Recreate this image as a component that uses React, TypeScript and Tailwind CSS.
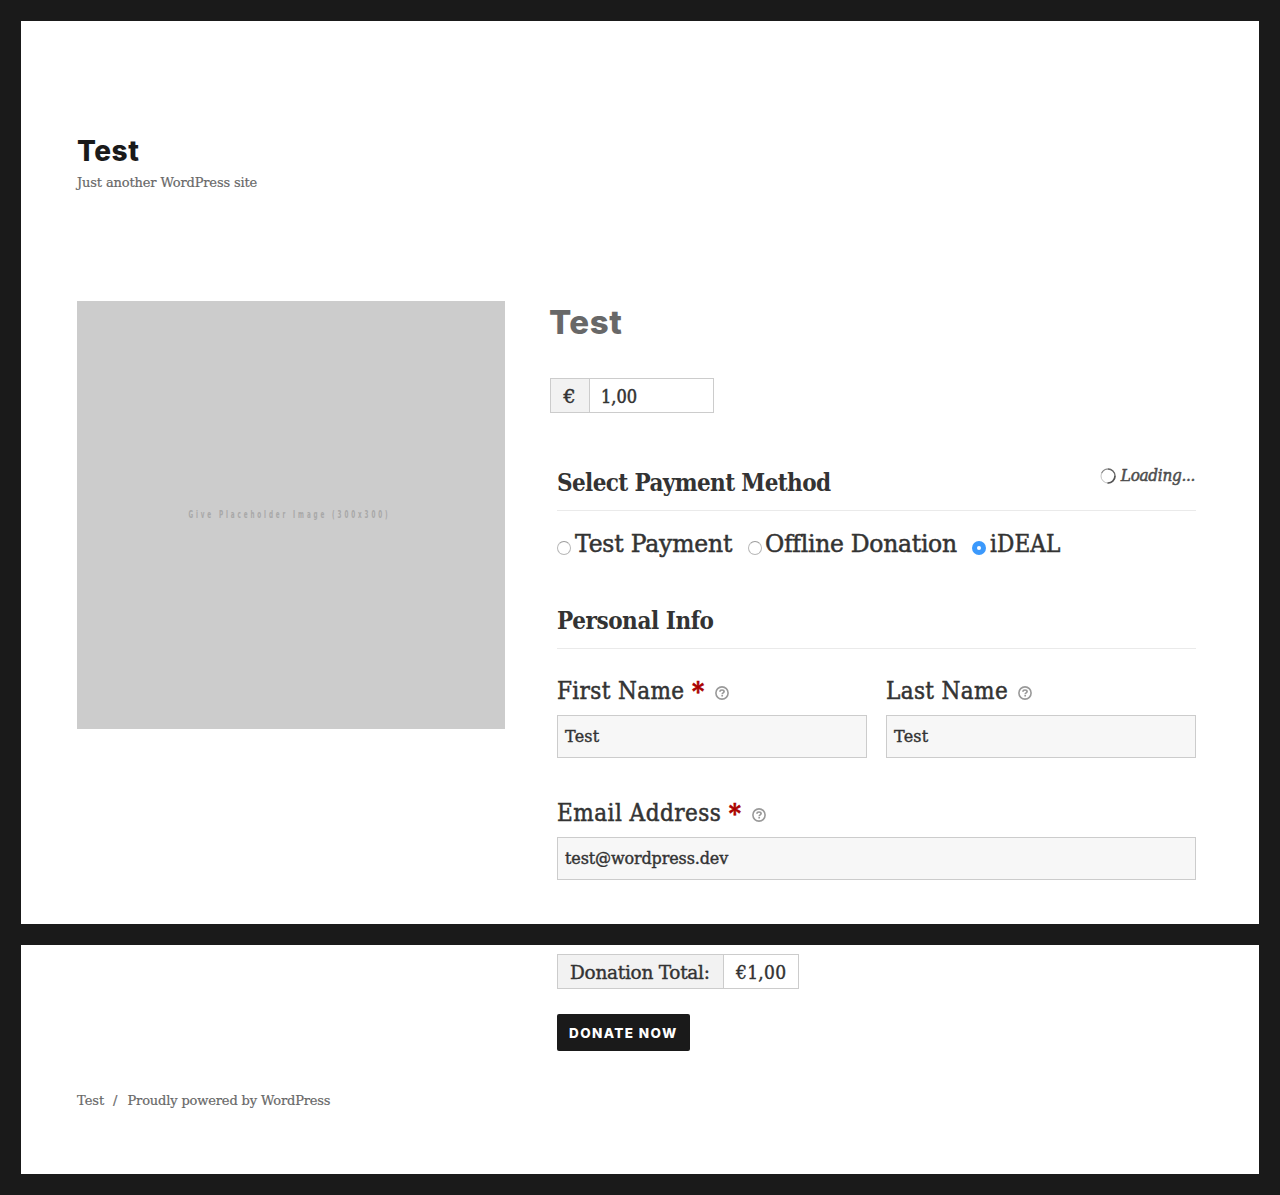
import type { ReactNode } from "react";

const serif = "font-['DejaVu_Serif_Condensed','DejaVu_Serif',serif]";
const wideSerif = "font-['DejaVu_Serif',serif]";
const sans = "font-['Inter',sans-serif]";
const thick = "[-webkit-text-stroke:0.5px_currentColor]";

function HelpIcon({ className }: { className: string }) {
  return (
    <svg viewBox="0 0 14 14" className={`h-[14px] w-[14px] shrink-0 text-[#999] ${className}`} fill="none" stroke="currentColor">
      <circle cx="7" cy="7" r="6.1" strokeWidth="1.6" />
      <path d="M4.9 5.7C5 4.5 5.9 4 7 4c1.2 0 2.1.6 2.1 1.6C9.1 6.9 7.2 6.8 7.2 8.2" strokeWidth="1.7" />
      <path d="M7.2 9v1.5" strokeWidth="1.7" />
    </svg>
  );
}

function Spinner() {
  return (
    <svg viewBox="0 0 16 16" className="mt-[5px] h-4 w-4 shrink-0" fill="none">
      <circle cx="8" cy="8" r="7" stroke="#bbb" strokeWidth="0.9" />
      <path d="M1.6 5.2A7 7 0 0 1 8 1" stroke="#888" strokeWidth="1.1" />
      <path d="M8 1A7 7 0 0 1 15 8" stroke="#666" strokeWidth="1.3" />
      <path d="M15 8A7 7 0 0 1 7.5 15" stroke="#555" strokeWidth="1.7" />
    </svg>
  );
}

function Radio({ checked = false }: { checked?: boolean }) {
  return checked ? (
    <span className="mt-[13px] flex h-[14px] w-[14px] shrink-0 items-center justify-center rounded-full bg-[#3b99fc]">
      <span className="h-1 w-1 rounded-full bg-white" />
    </span>
  ) : (
    <span className="mt-[13px] h-[14px] w-[14px] shrink-0 rounded-full border border-[#b8b8b8] border-t-[#9c9c9c] bg-white" />
  );
}

function Label({ children, required = false, spacing }: { children: ReactNode; required?: boolean; spacing: string }) {
  return (
    <div className="flex h-8 text-[24px] leading-[32px]">
      <span className={`${spacing} ${thick}`}>{children}</span>
      {required && (
        <span className="ml-[7.5px] w-[13.5px] text-[26px] font-bold leading-[33px] text-[#a00] [-webkit-text-stroke:0.6px_currentColor]">*</span>
      )}
      <HelpIcon className="ml-[10px] mt-[10.5px]" />
    </div>
  );
}

function Field({ value, spacing }: { value: string; spacing: string }) {
  return (
    <div className={`mt-2 h-[43px] border border-[#ccc] bg-[#f7f7f7] pl-[7px] text-[16px] leading-[41px] [-webkit-text-stroke:0.4px_currentColor] ${wideSerif} ${spacing}`}>
      {value}
    </div>
  );
}

export default function App() {
  return (
    <div className={`flex h-[1195px] w-[1280px] flex-col gap-[21px] bg-[#1a1a1a] p-[21px] text-[#333] ${serif}`}>
      <main className="h-[903px] bg-white px-[56px] pt-[112px]">
        <h1 className={`text-[28px] font-extrabold leading-[36px] tracking-[0.5px] text-[#1a1a1a] ${sans}`}>Test</h1>
        <p className={`mt-[4px] text-[13px] leading-[20px] tracking-[-0.14px] text-[#686868] [-webkit-text-stroke:0.2px_currentColor] ${wideSerif}`}>
          Just another WordPress site
        </p>

        <div className="mt-[108px] flex">
          <div className="flex h-[428px] w-[428px] shrink-0 items-center justify-center bg-[#ccc] pb-[2px] pr-[3px]">
            <span className="scale-x-[0.6] whitespace-nowrap font-['DejaVu_Sans_Condensed',sans-serif] text-[10.5px] font-bold leading-[12px] tracking-[4.8px] text-[#a8a8a8]">
              Give Placeholder Image (300x300)
            </span>
          </div>

          <div className="ml-[45px] w-[646px] pt-px">
            <h2 className={`-ml-px text-[33px] font-extrabold leading-[40px] tracking-[0.6px] text-[#686868] ${sans}`}>Test</h2>

            <div className={`mt-[36px] flex h-[35px] w-[164px] border border-[#ccc] text-[18px] leading-[35px] ${thick}`}>
              <span className={`w-[39px] border-r border-[#ccc] bg-[#f2f2f2] pr-px text-center text-[19px] ${wideSerif}`}>€</span>
              <span className="pl-[11px]">1,00</span>
            </div>

            <div className="mt-[50px] pl-[7px]">
              <div className="flex h-[48px] items-start justify-between border-b border-[#eaeaea]">
                <h3 className="pt-1 text-[24px] font-bold leading-[32px] tracking-[-0.63px]">Select Payment Method</h3>
                <div className="mr-px flex gap-[5px] text-[17px] italic leading-[24px] tracking-[-0.32px] text-[#4d4d4d]">
                  <Spinner />
                  <span className={thick}>Loading...</span>
                </div>
              </div>

              <div className={`mt-[17px] flex h-8 text-[23.5px] leading-[32px] ${thick}`}>
                <Radio />
                <span className={`ml-[4px] w-[173px] tracking-[-0.2px] ${wideSerif}`}>Test Payment</span>
                <Radio />
                <span className={`ml-[3px] w-[207px] tracking-[-0.3px] ${wideSerif}`}>Offline Donation</span>
                <Radio checked />
                <span className="ml-[4px] text-[24px] tracking-[0.1px]">iDEAL</span>
              </div>

              <div className="mt-[45px] h-[44px] border-b border-[#eaeaea]">
                <h3 className="text-[24px] font-bold leading-[32px] tracking-[-0.43px]">Personal Info</h3>
              </div>

              <div className="mt-[26px] grid grid-cols-2 gap-[19px]">
                <div>
                  <Label required spacing="tracking-[0.36px]">First Name</Label>
                  <Field value="Test" spacing="tracking-[0.2px]" />
                </div>
                <div>
                  <Label spacing="tracking-[0.36px]">Last Name</Label>
                  <Field value="Test" spacing="tracking-[0.2px]" />
                </div>
              </div>
              <div className="mt-[39px]">
                <Label required spacing="tracking-[0.47px]">Email Address</Label>
                <Field value="test@wordpress.dev" spacing="tracking-[-0.13px]" />
              </div>
            </div>
          </div>
        </div>
      </main>

      <footer className="h-[229px] bg-white px-[56px] pt-[9px]">
        <div className="pl-[480px]">
          <div className="flex h-[35px] w-[242px] border border-[#ccc] text-[19px] leading-[35px] [-webkit-text-stroke:0.4px_currentColor]">
            <span className={`w-[166px] border-r border-[#ccc] bg-[#f2f2f2] pl-[12px] text-[18.5px] tracking-[-0.28px] ${wideSerif}`}>Donation Total:</span>
            <span className="pl-[12px] tracking-[0.3px]">€1,00</span>
          </div>
          <button className={`mt-[25px] block h-[37px] w-[133px] rounded-[2px] bg-[#1a1a1a] pl-[12px] text-left text-[13.5px] font-extrabold leading-[38px] tracking-[1.4px] text-white ${sans}`}>
            DONATE NOW
          </button>
        </div>
        <div className={`mt-[40px] flex text-[13px] leading-[20px] text-[#686868] [-webkit-text-stroke:0.2px_currentColor] ${wideSerif}`}>
          <span className="w-[36px]">Test</span>
          <span className="w-[14.5px]">/</span>
          <span className="tracking-[-0.15px]">Proudly powered by WordPress</span>
        </div>
      </footer>
    </div>
  );
}
